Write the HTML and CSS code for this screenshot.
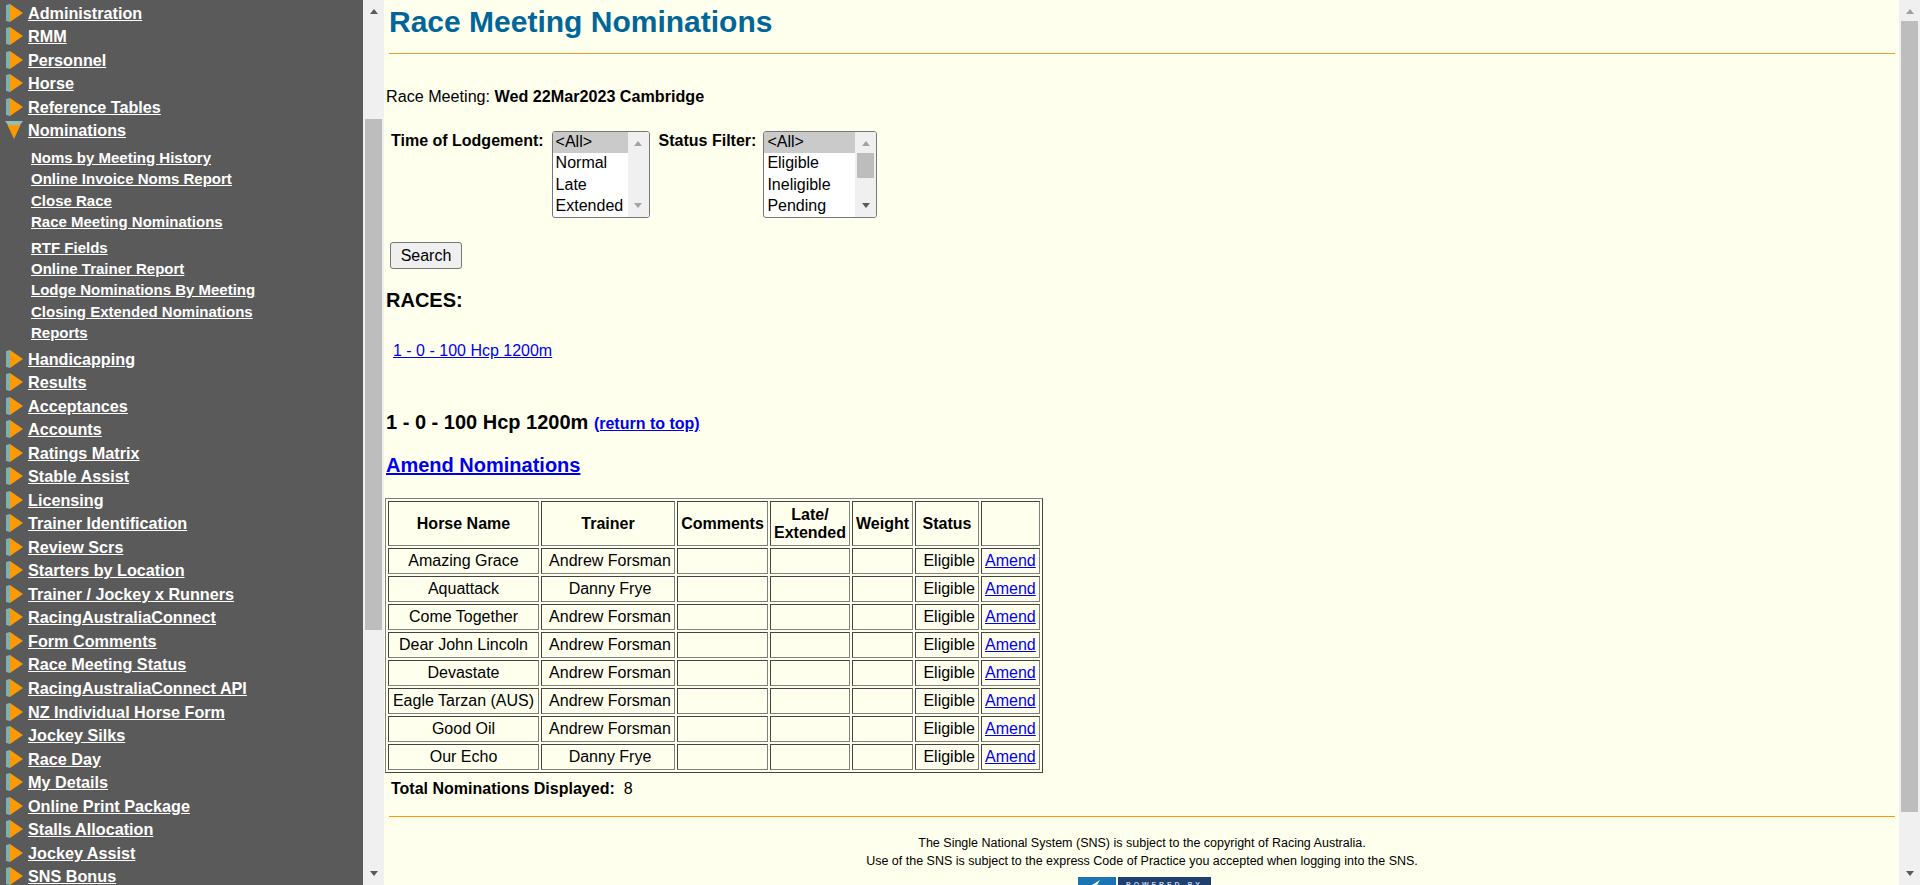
FILE: index.html
```html
<!DOCTYPE html>
<html lang="en">

<head>
  <meta charset="UTF-8">
  <meta name="viewport" content="width=device-width, initial-scale=1.0">
  <title>Race Meeting Nominations</title>
  <link rel="stylesheet" href="styles.css">
</head>

<body>
  <svg class="defs">
    <symbol id="closed" viewBox="0 0 17 18">
      <polygon points="0,1 4,0 4,18 0,17" fill="#7fb0ab"/>
      <polygon points="4,0 17,9 4,18" fill="#ff9900"/>
    </symbol>
    <symbol id="open" viewBox="0 0 18 18">
      <polygon points="0,0 18,0 15,4 3,4" fill="#8fc0c0"/>
      <polygon points="2.5,4 15.5,4 9,18" fill="#ff9900"/>
    </symbol>
  </svg>

  <nav class="menu">
    <div class="menu-item"><svg class="arrow"><use href="#closed"/></svg><a href="#">Administration</a></div>
    <div class="menu-item"><svg class="arrow"><use href="#closed"/></svg><a href="#">RMM</a></div>
    <div class="menu-item"><svg class="arrow"><use href="#closed"/></svg><a href="#">Personnel</a></div>
    <div class="menu-item"><svg class="arrow"><use href="#closed"/></svg><a href="#">Horse</a></div>
    <div class="menu-item"><svg class="arrow"><use href="#closed"/></svg><a href="#">Reference Tables</a></div>
    <div class="menu-item"><svg class="arrow arrow-open"><use href="#open"/></svg><a href="#">Nominations</a></div>
    <div class="submenu">
      <a href="#">Noms by Meeting History</a>
      <a href="#">Online Invoice Noms Report</a>
      <a href="#">Close Race</a>
      <a href="#">Race Meeting Nominations</a>
      <a href="#" class="gap">RTF Fields</a>
      <a href="#">Online Trainer Report</a>
      <a href="#">Lodge Nominations By Meeting</a>
      <a href="#">Closing Extended Nominations</a>
      <a href="#">Reports</a>
    </div>
    <div class="menu-item"><svg class="arrow"><use href="#closed"/></svg><a href="#">Handicapping</a></div>
    <div class="menu-item"><svg class="arrow"><use href="#closed"/></svg><a href="#">Results</a></div>
    <div class="menu-item"><svg class="arrow"><use href="#closed"/></svg><a href="#">Acceptances</a></div>
    <div class="menu-item"><svg class="arrow"><use href="#closed"/></svg><a href="#">Accounts</a></div>
    <div class="menu-item"><svg class="arrow"><use href="#closed"/></svg><a href="#">Ratings Matrix</a></div>
    <div class="menu-item"><svg class="arrow"><use href="#closed"/></svg><a href="#">Stable Assist</a></div>
    <div class="menu-item"><svg class="arrow"><use href="#closed"/></svg><a href="#">Licensing</a></div>
    <div class="menu-item"><svg class="arrow"><use href="#closed"/></svg><a href="#">Trainer Identification</a></div>
    <div class="menu-item"><svg class="arrow"><use href="#closed"/></svg><a href="#">Review Scrs</a></div>
    <div class="menu-item"><svg class="arrow"><use href="#closed"/></svg><a href="#">Starters by Location</a></div>
    <div class="menu-item"><svg class="arrow"><use href="#closed"/></svg><a href="#">Trainer / Jockey x Runners</a></div>
    <div class="menu-item"><svg class="arrow"><use href="#closed"/></svg><a href="#">RacingAustraliaConnect</a></div>
    <div class="menu-item"><svg class="arrow"><use href="#closed"/></svg><a href="#">Form Comments</a></div>
    <div class="menu-item"><svg class="arrow"><use href="#closed"/></svg><a href="#">Race Meeting Status</a></div>
    <div class="menu-item"><svg class="arrow"><use href="#closed"/></svg><a href="#">RacingAustraliaConnect API</a></div>
    <div class="menu-item"><svg class="arrow"><use href="#closed"/></svg><a href="#">NZ Individual Horse Form</a></div>
    <div class="menu-item"><svg class="arrow"><use href="#closed"/></svg><a href="#">Jockey Silks</a></div>
    <div class="menu-item"><svg class="arrow"><use href="#closed"/></svg><a href="#">Race Day</a></div>
    <div class="menu-item"><svg class="arrow"><use href="#closed"/></svg><a href="#">My Details</a></div>
    <div class="menu-item"><svg class="arrow"><use href="#closed"/></svg><a href="#">Online Print Package</a></div>
    <div class="menu-item"><svg class="arrow"><use href="#closed"/></svg><a href="#">Stalls Allocation</a></div>
    <div class="menu-item"><svg class="arrow"><use href="#closed"/></svg><a href="#">Jockey Assist</a></div>
    <div class="menu-item"><svg class="arrow"><use href="#closed"/></svg><a href="#">SNS Bonus</a></div>
  </nav>

  <div class="scrollbar menu-scroll">
    <span class="arrow-up"></span>
    <span class="thumb"></span>
    <span class="arrow-down"></span>
  </div>

  <main class="content">
    <h1>Race Meeting Nominations</h1>
    <hr class="rule">

    <p class="meeting">Race Meeting: <b>Wed 22Mar2023 Cambridge</b></p>

    <form class="filters">
      <label class="filter-label">Time of Lodgement:</label>
      <div class="listbox lodgement">
        <ul>
          <li class="selected">&lt;All&gt;</li>
          <li>Normal</li>
          <li>Late</li>
          <li>Extended</li>
        </ul>
        <div class="list-scroll">
          <span class="arrow-up faded"></span>
          <span class="arrow-down faded"></span>
        </div>
      </div>
      <label class="filter-label status-label">Status Filter:</label>
      <div class="listbox status">
        <ul>
          <li class="selected">&lt;All&gt;</li>
          <li>Eligible</li>
          <li>Ineligible</li>
          <li>Pending</li>
        </ul>
        <div class="list-scroll">
          <span class="arrow-up faded"></span>
          <span class="list-thumb"></span>
          <span class="arrow-down"></span>
        </div>
      </div>
    </form>

    <button type="button" class="search">Search</button>

    <h3 class="races">RACES:</h3>
    <p class="race-link"><a href="#">1 - 0 - 100 Hcp 1200m</a></p>

    <h3 class="race-title">1 - 0 - 100 Hcp 1200m <a href="#">(return to top)</a></h3>
    <h3 class="amend-all"><a href="#">Amend Nominations</a></h3>

    <table class="noms">
      <tr>
        <th class="c1">Horse Name</th>
        <th class="c2">Trainer</th>
        <th class="c3">Comments</th>
        <th class="c4">Late/<br>Extended</th>
        <th class="c5">Weight</th>
        <th class="c6">Status</th>
        <th class="c7"></th>
      </tr>
      <tr><td>Amazing Grace</td><td class="trainer">Andrew Forsman</td><td></td><td></td><td></td><td class="state">Eligible</td><td><a href="#">Amend</a></td></tr>
      <tr><td>Aquattack</td><td class="trainer">Danny Frye</td><td></td><td></td><td></td><td class="state">Eligible</td><td><a href="#">Amend</a></td></tr>
      <tr><td>Come Together</td><td class="trainer">Andrew Forsman</td><td></td><td></td><td></td><td class="state">Eligible</td><td><a href="#">Amend</a></td></tr>
      <tr><td>Dear John Lincoln</td><td class="trainer">Andrew Forsman</td><td></td><td></td><td></td><td class="state">Eligible</td><td><a href="#">Amend</a></td></tr>
      <tr><td>Devastate</td><td class="trainer">Andrew Forsman</td><td></td><td></td><td></td><td class="state">Eligible</td><td><a href="#">Amend</a></td></tr>
      <tr><td>Eagle Tarzan (AUS)</td><td class="trainer">Andrew Forsman</td><td></td><td></td><td></td><td class="state">Eligible</td><td><a href="#">Amend</a></td></tr>
      <tr><td>Good Oil</td><td class="trainer">Andrew Forsman</td><td></td><td></td><td></td><td class="state">Eligible</td><td><a href="#">Amend</a></td></tr>
      <tr><td>Our Echo</td><td class="trainer">Danny Frye</td><td></td><td></td><td></td><td class="state">Eligible</td><td><a href="#">Amend</a></td></tr>
    </table>

    <p class="total"><b>Total Nominations Displayed:</b>&nbsp; 8</p>
    <hr class="rule bottom">

    <footer class="legal">
      <p>The Single National System (SNS) is subject to the copyright of Racing Australia.</p>
      <p>Use of the SNS is subject to the express Code of Practice you accepted when logging into the SNS.</p>
      <div class="powered">
        <svg class="powered-mark" viewBox="0 0 38 40">
          <rect width="38" height="40" fill="#1b75b5"/>
          <polygon points="6,11 14,8 22,3 19,8 18,14 14,11" fill="#fff"/>
          <circle cx="25" cy="9" r="1" fill="#fff"/>
        </svg>
        <span class="powered-text">POWERED BY</span>
      </div>
    </footer>
  </main>

  <div class="scrollbar page-scroll">
    <span class="arrow-up"></span>
    <span class="thumb"></span>
    <span class="arrow-down"></span>
  </div>
</body>

</html>
```

FILE: styles.css
```css
html,
body {
  height: 100%;
}

body {
  display: flex;
  margin: 0;
  overflow: hidden;
  font-family: "Liberation Sans", Arial, sans-serif;
  font-size: 16px;
  color: #000;
  background-color: #ffffee;
}

.defs {
  display: none;
}

/* left menu */
.menu {
  width: 363px;
  height: 885px;
  flex: none;
  overflow: hidden;
  box-sizing: border-box;
  padding: 1.7px 0 0 6px;
  background-color: #5a5a5a;
}

.menu a {
  color: #fff;
  font-weight: bold;
}

.menu-item {
  display: flex;
  align-items: flex-start;
  height: 23.54px;
  font-size: 16.2px;
  line-height: 22px;
}

.arrow {
  width: 17px;
  height: 18px;
  flex: none;
  margin: 2px 5px 0 0;
}

.arrow-open {
  width: 18px;
  margin: 2px 5px 0 -1px;
}

.submenu {
  display: flex;
  flex-direction: column;
  padding: 4px 0 4px 25px;
  font-size: 15px;
  line-height: 21.4px;
}

.submenu .gap {
  margin-top: 4px;
}

/* fake scrollbars */
.scrollbar {
  display: flex;
  flex-direction: column;
  align-items: center;
  width: 21px;
  height: 885px;
  flex: none;
  box-sizing: border-box;
  padding-top: 9px;
  background-color: #f0f0f0;
}

.thumb {
  width: 17px;
  background-color: #bdbdbd;
}

.menu-scroll .thumb {
  height: 511px;
  margin-top: 105px;
}

.page-scroll .thumb {
  height: 791px;
  margin-top: 7px;
}

.arrow-up,
.arrow-down {
  width: 0;
  height: 0;
  border-left: 4.5px solid transparent;
  border-right: 4.5px solid transparent;
}

.arrow-up {
  border-bottom: 5px solid #5a5a5a;
}

.arrow-down {
  margin-top: auto;
  margin-bottom: 9px;
  border-top: 5px solid #5a5a5a;
}

.page-scroll .arrow-up {
  border-bottom-color: #a0a0a0;
}

/* main page */
.content {
  flex: 1;
  min-width: 0;
  height: 885px;
  overflow: hidden;
  padding: 0 4px 0 2px;
}

h1 {
  margin: 2px 0 0 3px;
  font-size: 30px;
  line-height: 40px;
  color: #006699;
}

.rule {
  height: 1px;
  margin: 11px 0 0 3px;
  border: 0;
  background-color: #f0a030;
}

.meeting {
  margin: 33px 0 0;
  font-size: 16.15px;
  line-height: 18px;
}

.filters {
  display: flex;
  align-items: flex-start;
  margin-top: 26px;
}

.filter-label {
  margin: 1px 0 0 5px;
  font-weight: bold;
  line-height: 18px;
}

.status-label {
  margin-left: 9px;
}

.listbox {
  display: flex;
  height: 85px;
  margin-left: 8px;
  overflow: hidden;
  background-color: #fff;
  border: 1px solid #767676;
  border-radius: 3px;
}

.lodgement {
  width: 96px;
}

.status {
  width: 112px;
  margin-left: 7px;
}

.listbox ul {
  flex: 1;
  margin: 0;
  padding: 0;
  list-style: none;
}

.listbox li {
  padding: 0 0 1.3px 3px;
  line-height: 20px;
}

.listbox .selected {
  background-color: #cacaca;
}

.list-scroll {
  display: flex;
  flex-direction: column;
  align-items: center;
  width: 21px;
  flex: none;
  box-sizing: border-box;
  padding-top: 9px;
  background-color: #f0f0f0;
}

.list-scroll .arrow-down {
  margin-bottom: 9px;
}

.list-thumb {
  width: 17px;
  height: 25px;
  margin-top: 7px;
  background-color: #bdbdbd;
}

.faded.arrow-up {
  border-bottom-color: #a3a3a3;
}

.faded.arrow-down {
  border-top-color: #a3a3a3;
}

.search {
  display: block;
  width: 72px;
  height: 27px;
  margin: 24px 0 0 4px;
  padding: 0;
  font-family: inherit;
  font-size: 16px;
  color: #000;
  background-color: #efefef;
  border: 1px solid #767676;
  border-radius: 3px;
}

h3 {
  margin: 0;
  font-size: 20px;
  line-height: 22px;
}

.races {
  margin-top: 20px;
}

.race-link {
  margin: 31px 0 0 7px;
  line-height: 18px;
}

.race-title {
  margin-top: 51px;
}

.race-title a {
  font-size: 16px;
}

.amend-all {
  margin-top: 19px;
}

/* nominations table */
.noms {
  margin: 22px 0 0 -1px;
  border: 1px solid;
  border-color: #808080 #444 #444 #808080;
  border-spacing: 2px;
  background-color: #ffffee;
}

.noms th,
.noms td {
  box-sizing: border-box;
  padding: 3px;
  border: 1px solid;
  border-color: #444 #808080 #808080 #444;
  text-align: center;
  line-height: 18px;
  white-space: nowrap;
}

.noms td {
  height: 26px;
}

.noms th {
  height: 45px;
  padding: 3px 0;
}

.noms td.trainer {
  padding-left: 7px;
}

.noms td.state {
  text-align: right;
}

.c1 { width: 151px; }
.c2 { width: 134px; }
.c3 { width: 91px; }
.c4 { width: 80px; }
.c5 { width: 61px; }
.c6 { width: 64px; }
.c7 { width: 57px; }

.total {
  margin: 7px 0 0 5px;
  line-height: 18px;
}

.rule.bottom {
  margin-top: 18px;
  background-color: #ff9900;
}

.legal {
  margin-left: 3px;
  font-size: 12.5px;
  line-height: 18px;
  text-align: center;
}

.legal p {
  margin: 0;
}

.legal p:first-child {
  margin-top: 17px;
}

.powered {
  display: flex;
  justify-content: center;
  gap: 2px;
  height: 40px;
  margin: 7px 0 0 5px;
}

.powered-mark {
  width: 38px;
  height: 40px;
}

.powered-text {
  box-sizing: border-box;
  width: 93px;
  padding-top: 2px;
  font-size: 7px;
  font-weight: bold;
  letter-spacing: 2.9px;
  line-height: 12px;
  color: #c3d2e4;
  background-color: #1f3f6e;
}
```
